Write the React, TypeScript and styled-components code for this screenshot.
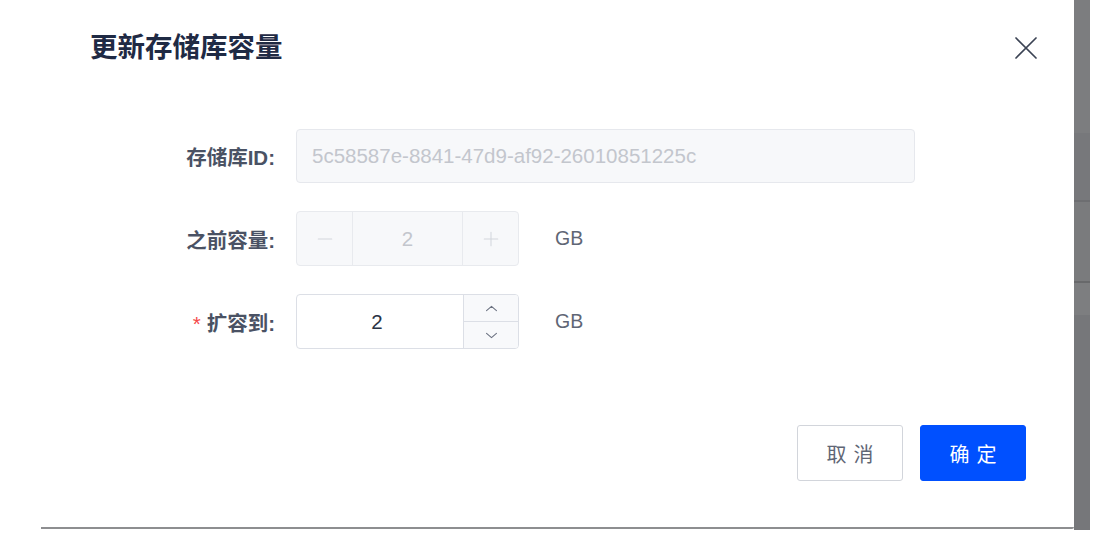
import React from "react";
import styled, { createGlobalStyle } from "styled-components";

const GlobalStyle = createGlobalStyle`
  body {
    margin: 0;
    background: #ffffff;
    font-family: "Liberation Sans", "Noto Sans CJK SC", sans-serif;
  }
`;

const Stage = styled.div`
  display: flex;
  align-items: flex-start;
  height: 550px;
  padding-left: 41px;
`;

const Dialog = styled.div`
  width: 1033px;
  height: 527px;
  background: #ffffff;
  border-bottom: 2px solid #8d8e90;
  border-bottom-right-radius: 2px;
  display: flex;
  flex-direction: column;
`;

const Backdrop = styled.div`
  width: 16px;
  height: 530px;
  background: linear-gradient(
    to bottom,
    #7c7d7f 0px,
    #7c7d7f 133px,
    #77787b 133px,
    #77787b 200px,
    #6d6e71 200px,
    #6d6e71 202px,
    #7a7b7d 202px,
    #7a7b7d 281px,
    #68696b 281px,
    #68696b 283px,
    #7d7e80 283px,
    #7d7e80 315px,
    #76777a 315px
  );
`;

const Header = styled.div`
  display: flex;
  justify-content: space-between;
  align-items: center;
  padding: 30px 36px 0 49px;
`;

const Title = styled.h2`
  margin: 0;
  font-size: 27.5px;
  line-height: 36px;
  font-weight: 700;
  color: #1f2a44;
`;

const CloseButton = styled.button`
  border: none;
  background: none;
  padding: 0;
  width: 24px;
  height: 24px;
  display: flex;
  align-items: center;
  justify-content: center;
  color: #3b4354;
  cursor: pointer;
`;

const Form = styled.div`
  display: flex;
  flex-direction: column;
  gap: 28px;
  padding-top: 63px;
`;

const Row = styled.div`
  display: grid;
  grid-template-columns: 234px auto;
  column-gap: 21px;
  align-items: center;
`;

const Label = styled.label`
  text-align: right;
  font-size: 20.5px;
  font-weight: 700;
  color: #4a5264;
`;

const Required = styled.span`
  color: #f5484a;
  margin-right: 6px;
  font-weight: 400;
`;

const Field = styled.div`
  display: flex;
  align-items: center;
  gap: 36px;
`;

const TextInput = styled.div`
  box-sizing: border-box;
  width: 619px;
  height: 54px;
  padding: 0 15px;
  display: flex;
  align-items: center;
  border: 1px solid #e6e8ed;
  border-radius: 4px;
  background: #f7f8fa;
  font-size: 20.5px;
  color: #c3c6cd;
`;

const Stepper = styled.div<{ $disabled?: boolean }>`
  box-sizing: border-box;
  width: 223px;
  height: 55px;
  display: flex;
  border: 1px solid ${(p) => (p.$disabled ? "#e8eaee" : "#dcdfe6")};
  border-radius: 4px;
  background: ${(p) => (p.$disabled ? "#f7f8fa" : "#ffffff")};
  overflow: hidden;
`;

const StepButton = styled.div<{ $side: "left" | "right" }>`
  width: 55px;
  display: flex;
  align-items: center;
  justify-content: center;
  color: #d3d6dc;
  ${(p) =>
    p.$side === "left"
      ? "border-right: 1px solid #e8eaee;"
      : "border-left: 1px solid #e8eaee;"}
`;

const StepValue = styled.div<{ $disabled?: boolean; $shift?: number }>`
  flex: 1;
  display: flex;
  align-items: center;
  justify-content: center;
  padding-right: ${(p) => p.$shift ?? 0}px;
  font-size: 20.5px;
  color: ${(p) => (p.$disabled ? "#c3c6cd" : "#2a3344")};
`;

const Arrows = styled.div`
  width: 54px;
  display: flex;
  flex-direction: column;
  border-left: 1px solid #dcdfe6;
  background: #f8f9fb;
`;

const ArrowHalf = styled.div<{ $top?: boolean }>`
  flex: 1;
  display: flex;
  align-items: center;
  justify-content: center;
  color: #6b7180;
  ${(p) => (p.$top ? "border-bottom: 1px solid #dcdfe6;" : "")}
`;

const Unit = styled.span`
  font-size: 19.5px;
  color: #5f6675;
`;

const Footer = styled.div`
  margin-top: auto;
  display: flex;
  justify-content: flex-end;
  gap: 17px;
  padding: 0 48px 46px 0;
`;

const Button = styled.button<{ $primary?: boolean }>`
  box-sizing: border-box;
  width: 106px;
  height: 56px;
  border-radius: 3px;
  font-family: inherit;
  font-size: 20px;
  letter-spacing: 0.34em;
  padding: 0 0 0 0.34em;
  cursor: pointer;
  border: 1px solid ${(p) => (p.$primary ? "#0050ff" : "#d2d5db")};
  background: ${(p) => (p.$primary ? "#0050ff" : "#ffffff")};
  color: ${(p) => (p.$primary ? "#ffffff" : "#5f6675")};
`;

const Icon = ({ d, size, stroke = 1.6 }: { d: string; size: number; stroke?: number }) => (
  <svg width={size} height={size} viewBox="0 0 24 24" fill="none" stroke="currentColor" strokeWidth={stroke} strokeLinecap="round" strokeLinejoin="round">
    <path d={d} />
  </svg>
);

const App = () => {
  const repoId = "5c58587e-8841-47d9-af92-26010851225c";

  return (
    <>
      <GlobalStyle />
      <Stage>
        <Dialog>
          <Header>
            <Title>更新存储库容量</Title>
            <CloseButton aria-label="close">
              <Icon size={24} d="M2 2L22 22M22 2L2 22" stroke={1.7} />
            </CloseButton>
          </Header>

          <Form>
            <Row>
              <Label>存储库ID:</Label>
              <Field>
                <TextInput>{repoId}</TextInput>
              </Field>
            </Row>

            <Row>
              <Label>之前容量:</Label>
              <Field>
                <Stepper $disabled>
                  <StepButton $side="left">
                    <Icon size={18} d="M3 12H21" stroke={1.4} />
                  </StepButton>
                  <StepValue $disabled>2</StepValue>
                  <StepButton $side="right">
                    <Icon size={18} d="M3 12H21M12 3V21" stroke={1.4} />
                  </StepButton>
                </Stepper>
                <Unit>GB</Unit>
              </Field>
            </Row>

            <Row>
              <Label>
                <Required>*</Required>扩容到:
              </Label>
              <Field>
                <Stepper>
                  <StepValue $shift={6}>2</StepValue>
                  <Arrows>
                    <ArrowHalf $top>
                      <Icon size={17} d="M5 15L12 9L19 15" stroke={1.5} />
                    </ArrowHalf>
                    <ArrowHalf>
                      <Icon size={17} d="M5 9L12 15L19 9" stroke={1.5} />
                    </ArrowHalf>
                  </Arrows>
                </Stepper>
                <Unit>GB</Unit>
              </Field>
            </Row>
          </Form>

          <Footer>
            <Button>取消</Button>
            <Button $primary>确定</Button>
          </Footer>
        </Dialog>
        <Backdrop />
      </Stage>
    </>
  );
};

export default App;
